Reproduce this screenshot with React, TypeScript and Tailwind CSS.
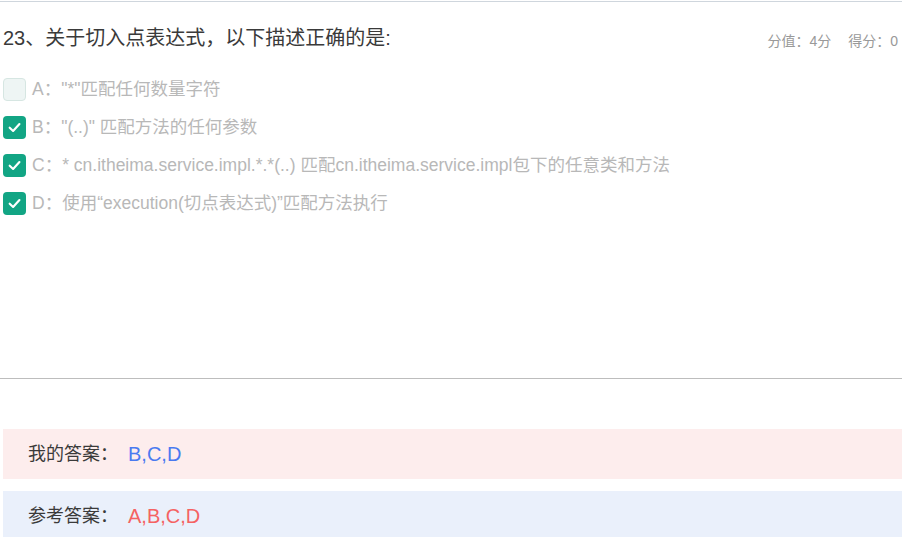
import React from "react";

const font = { fontFamily: '"Liberation Sans", "Noto Sans CJK SC", sans-serif' };

function Check({ checked }: { checked: boolean }) {
  if (!checked) {
    return <div className="w-[23px] h-[23px] rounded-[4px] bg-[#eef5f4] border border-[#d6e6e2] shrink-0" />;
  }
  return (
    <div className="w-[23px] h-[23px] rounded-[4px] bg-[#12a584] flex items-center justify-center shrink-0">
      <svg width="15" height="15" viewBox="0 0 14 14" fill="none">
        <path d="M2.5 7.2 L5.7 10.2 L11.6 3.8" stroke="white" strokeWidth="2" strokeLinecap="round" strokeLinejoin="round" />
      </svg>
    </div>
  );
}

const options = [
  { checked: false, text: 'A："*"匹配任何数量字符' },
  { checked: true, text: 'B："(..)" 匹配方法的任何参数' },
  { checked: true, text: "C：* cn.itheima.service.impl.*.*(..) 匹配cn.itheima.service.impl包下的任意类和方法" },
  { checked: true, text: "D：使用“execution(切点表达式)”匹配方法执行" },
];

export default function App() {
  return (
    <div className="w-[902px] h-[537px] bg-white overflow-hidden" style={font}>
      <div className="mt-px h-px bg-[#cfd6dd]" />
      <div className="pl-[3px] pr-[4px]">
        <div className="pt-[24px] flex items-start justify-between h-[50px]">
          <div className="text-[20px] leading-[24px] text-[#3a3a3a]">23、关于切入点表达式，以下描述正确的是:</div>
          <div className="text-[14px] leading-[16px] text-[#999] pt-[7px] flex gap-[17px]">
            <span>分值：4分</span>
            <span>得分：0</span>
          </div>
        </div>
        <div className="mt-[18px] flex flex-col">
          {options.map((o, i) => (
            <div key={i} className="h-[38px] flex items-center gap-[6px]">
              <Check checked={o.checked} />
              <span className="text-[17.5px] text-[#b8b8b8] whitespace-nowrap">{o.text}</span>
            </div>
          ))}
        </div>
      </div>
      <div className="mt-[156px] h-px bg-[#bdbdbd]" />
      <div className="ml-[3px] mt-[50px] h-[50px] bg-[#fdeded] flex items-center pl-[25px]">
        <span className="text-[18px] text-[#3a3a3a]">我的答案：</span>
        <span className="ml-[10px] text-[20px] text-[#4a7af0]">B,C,D</span>
      </div>
      <div className="ml-[3px] mt-[12px] h-[50px] bg-[#eaf0fb] flex items-center pl-[25px]">
        <span className="text-[18px] text-[#3a3a3a]">参考答案：</span>
        <span className="ml-[10px] text-[20px] text-[#f56262]">A,B,C,D</span>
      </div>
    </div>
  );
}
